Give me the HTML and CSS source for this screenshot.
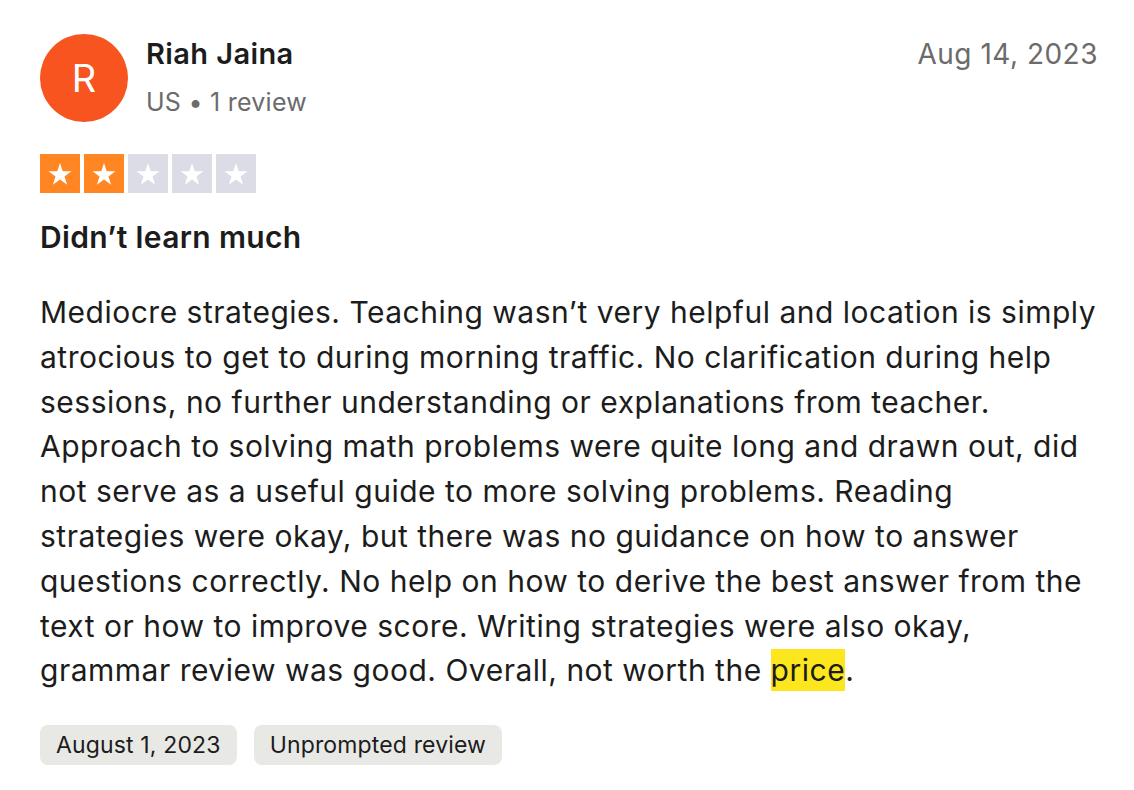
FILE: index.html
```html
<!DOCTYPE html>
<html>
<head>
<meta charset="utf-8">
<link rel="stylesheet" href="styles.css">
</head>
<body>
<article class="review">
  <header class="head">
    <div class="avatar">R</div>
    <div class="who">
      <div class="name">Riah Jaina</div>
      <div class="meta">US • 1 review</div>
    </div>
    <div class="date">Aug 14, 2023</div>
  </header>
  <div class="stars">
    <span class="star on"><svg viewBox="0 0 24 24"><path d="M12 3.2l2.2 6.6h7l-5.6 4.1 2.1 6.6L12 16.4 6.3 20.5l2.1-6.6-5.6-4.1h7z" fill="#fff"/></svg></span>
    <span class="star on"><svg viewBox="0 0 24 24"><path d="M12 3.2l2.2 6.6h7l-5.6 4.1 2.1 6.6L12 16.4 6.3 20.5l2.1-6.6-5.6-4.1h7z" fill="#fff"/></svg></span>
    <span class="star"><svg viewBox="0 0 24 24"><path d="M12 3.2l2.2 6.6h7l-5.6 4.1 2.1 6.6L12 16.4 6.3 20.5l2.1-6.6-5.6-4.1h7z" fill="#fff"/></svg></span>
    <span class="star"><svg viewBox="0 0 24 24"><path d="M12 3.2l2.2 6.6h7l-5.6 4.1 2.1 6.6L12 16.4 6.3 20.5l2.1-6.6-5.6-4.1h7z" fill="#fff"/></svg></span>
    <span class="star"><svg viewBox="0 0 24 24"><path d="M12 3.2l2.2 6.6h7l-5.6 4.1 2.1 6.6L12 16.4 6.3 20.5l2.1-6.6-5.6-4.1h7z" fill="#fff"/></svg></span>
  </div>
  <h2 class="title">Didn’t learn much</h2>
  <p class="body">Mediocre strategies. Teaching wasn’t very helpful and location is simply atrocious to get to during morning traffic. No clarification during help sessions, no further understanding or explanations from teacher. Approach to solving math problems were quite long and drawn out, did not serve as a useful guide to more solving problems. Reading strategies were okay, but there was no guidance on how to answer questions correctly. No help on how to derive the best answer from the text or how to improve score. Writing strategies were also okay, grammar review was good. Overall, not worth the <mark class="hl">price</mark>.</p>
  <div class="tags">
    <span class="tag">August 1, 2023</span>
    <span class="tag">Unprompted review</span>
  </div>
</article>
</body>
</html>
```
FILE: styles.css
```css
html, body { margin: 0; padding: 0; background: #fff; }
body { font-family: Inter, "Noto Sans", sans-serif; color: #1c1c1c; }
.review { width: 1058px; padding: 34px 36px 0 40px; }
.head { display: flex; align-items: flex-start; }
.avatar {
  width: 88px; height: 88px; border-radius: 50%;
  background: #f7541f; color: #fff;
  display: flex; align-items: center; justify-content: center;
  font-size: 38px; font-weight: 400; flex: none;
}
.who { margin-left: 18px; flex: 1; padding-top: 2px; }
.name { font-size: 29px; font-weight: 600; line-height: 36px; color: #1c1c1c; letter-spacing: 0.4px; }
.meta { font-size: 25px; line-height: 32px; color: #6b6b6b; margin-top: 14px; letter-spacing: 0.25px; }
.date { font-size: 28px; line-height: 36px; color: #6b6b6b; padding-top: 2px; letter-spacing: 0.5px; }
.stars { display: flex; gap: 4px; margin-top: 32px; }
.star { width: 40px; height: 39px; background: #dcdce6; display: flex; align-items: center; justify-content: center; }
.star.on { background: #ff8622; }
.star svg { width: 30px; height: 30px; }
.title { margin: 26px 0 0; font-size: 30px; font-weight: 600; line-height: 36px; letter-spacing: 0.35px; }
.body { margin: 35px 0 0; font-size: 30px; line-height: 44.8px; font-weight: 400; letter-spacing: 0.5px; }
.hl { background: #fce61e; color: inherit; padding: 3px 0; }
.tags { display: flex; gap: 17px; margin-top: 32px; }
.tag { background: #e8e8e5; border-radius: 8px; padding: 0 16px; height: 40px; display: flex; align-items: center; font-size: 23px; color: #1c1c1c; letter-spacing: 0.15px; }
```
